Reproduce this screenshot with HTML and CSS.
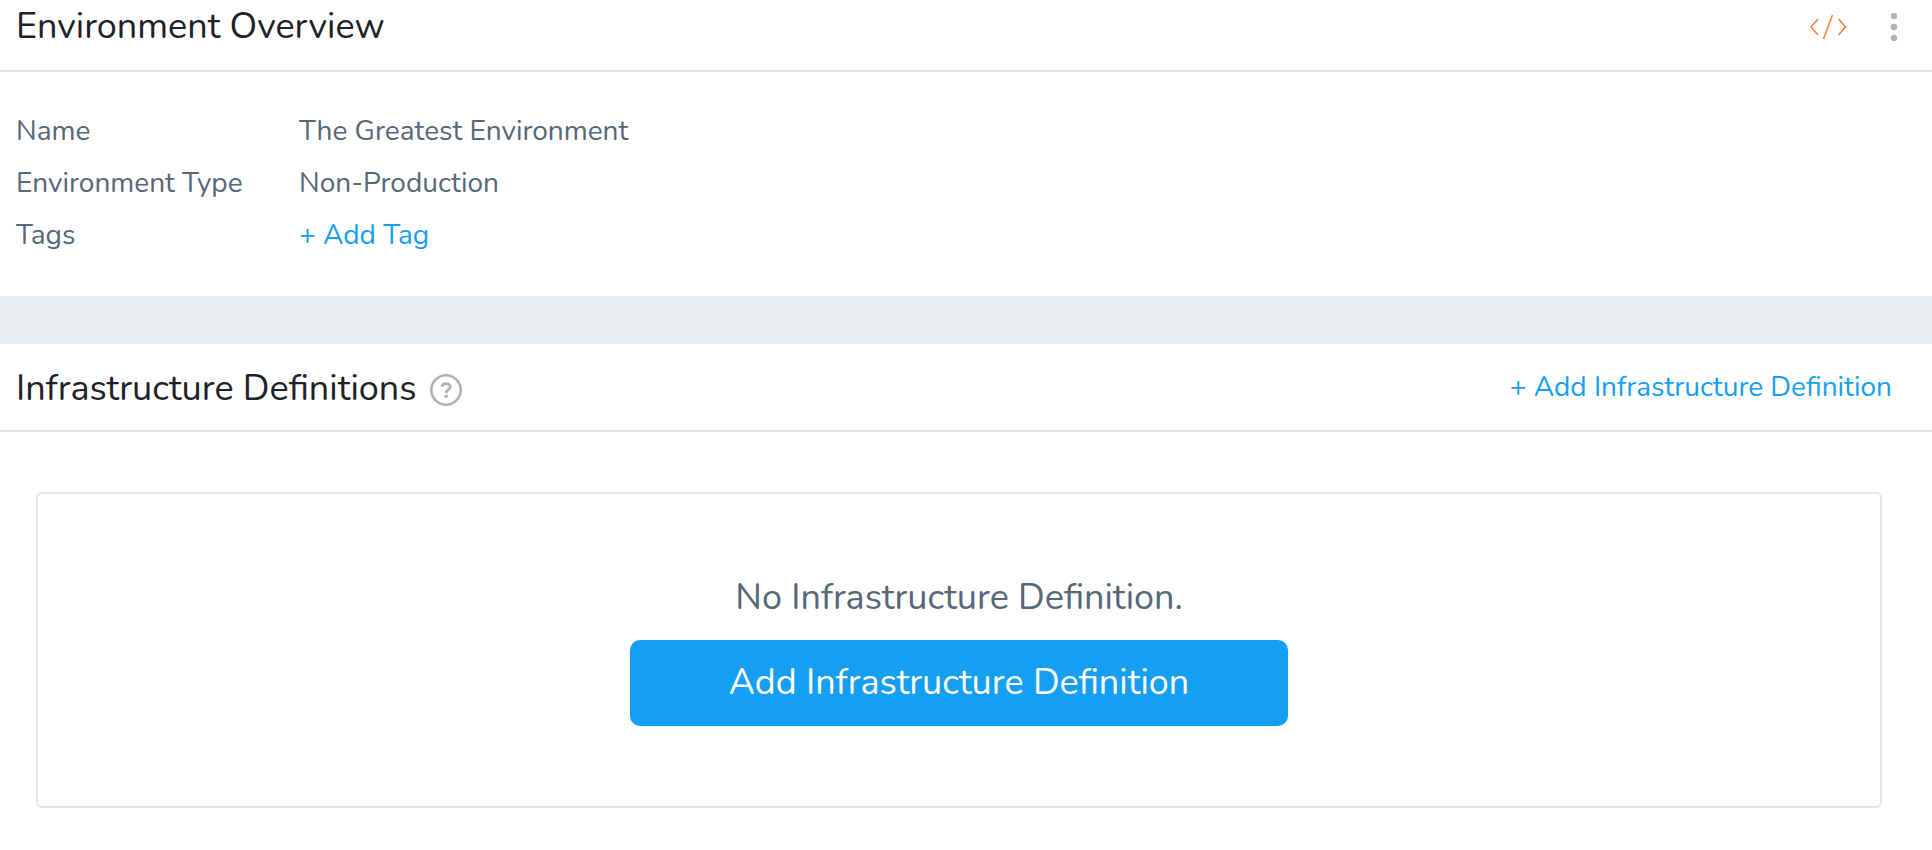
FILE: index.html
```html
<!DOCTYPE html>
<html lang="en">
<head>
<meta charset="utf-8">
<title>Environment Overview</title>
<link rel="stylesheet" href="styles.css">
</head>
<body>
<main>
  <section>
    <header class="section-header overview-header">
      <h1 class="title">Environment Overview</h1>
      <div class="actions">
        <button class="icon-button" type="button" aria-label="View as code">
          <svg width="36" height="26" viewBox="0 0 36 26" fill="none" stroke="#ff7f3f" stroke-width="1.6"><path d="M8 5 1 13l7 8M22.500 1l-9 24M28.500 5l7 8-7 8"/></svg>
        </button>
        <button class="icon-button" type="button" aria-label="More options">
          <svg width="8" height="28" viewBox="0 0 8 28" fill="#aab5c1"><circle cx="4" cy="3" r="3.2"/><circle cx="4" cy="14" r="3.2"/><circle cx="4" cy="25" r="3.2"/></svg>
        </button>
      </div>
    </header>
    <dl class="details">
      <dt>Name</dt><dd>The Greatest Environment</dd>
      <dt>Environment Type</dt><dd>Non-Production</dd>
      <dt>Tags</dt><dd><a class="link" href="#">+ Add Tag</a></dd>
    </dl>
  </section>
  <section class="infrastructure">
    <header class="section-header infrastructure-header">
      <div class="heading">
        <h2 class="title">Infrastructure Definitions</h2>
        <button class="icon-button help" type="button" aria-label="Help">
          <svg width="32" height="32" viewBox="0 0 32 32" fill="none" stroke="#b0b1b3" stroke-width="2.6"><circle cx="16" cy="16" r="14.700"/><path stroke-width="2.8" d="M11.800 12.800c.3-2 1.800-3.200 4.200-3.200s4.200 1.300 4.200 3.300c0 2.900-4 2.700-4 6.100"/><circle cx="16.200" cy="22.300" r="1.800" fill="#b0b1b3" stroke="none"/></svg>
        </button>
      </div>
      <a class="link" href="#">+ Add Infrastructure Definition</a>
    </header>
    <div class="empty-state">
      <p class="message">No Infrastructure Definition.</p>
      <button class="primary" type="button">Add Infrastructure Definition</button>
    </div>
  </section>
</main>
</body>
</html>
```
FILE: styles.css
```css
* { box-sizing: border-box; }
body {
  margin: 0;
  background: #fff;
  color: #566779;
  font: 28px/52px Nunito, Lato, sans-serif;
}
h1, h2, p, dl, dd { margin: 0; }
button { font: inherit; border: 0; cursor: pointer; }
.section-header {
  display: flex;
  justify-content: space-between;
  align-items: center;
  border-bottom: 2px solid #e1e5ea;
}
.overview-header { padding: 1px 34px 17px 16px; }
.infrastructure-header { align-items: flex-start; padding: 17px 40px 15px 16px; }
.title { font-size: 36px; font-weight: 400; line-height: 52px; color: #1d2228; }
.actions { display: flex; align-items: center; gap: 44px; }
.icon-button { display: flex; padding: 0; background: none; }
.heading { display: flex; align-items: center; gap: 13px; }
.details {
  display: grid;
  grid-template-columns: 283px 1fr;
  padding: 33px 16px 35px;
}
.link { color: #159ff2; text-decoration: none; }
.infrastructure { border-top: 48px solid #ebeff3; }
.infrastructure .title { padding-top: 2px; }
.help { padding-top: 4px; }
.empty-state {
  display: flex;
  flex-direction: column;
  align-items: center;
  gap: 16px;
  margin: 60px 50px 40px 36px;
  padding: 78px 24px 80px;
  border: 2px solid #e1e5ea;
  border-radius: 6px;
  text-align: center;
}
.message, .primary { font-size: 36px; }
.primary {
  padding: 17px 99px;
  border-radius: 10px;
  background: #159ff2;
  color: #fff;
  line-height: 52px;
}
```
